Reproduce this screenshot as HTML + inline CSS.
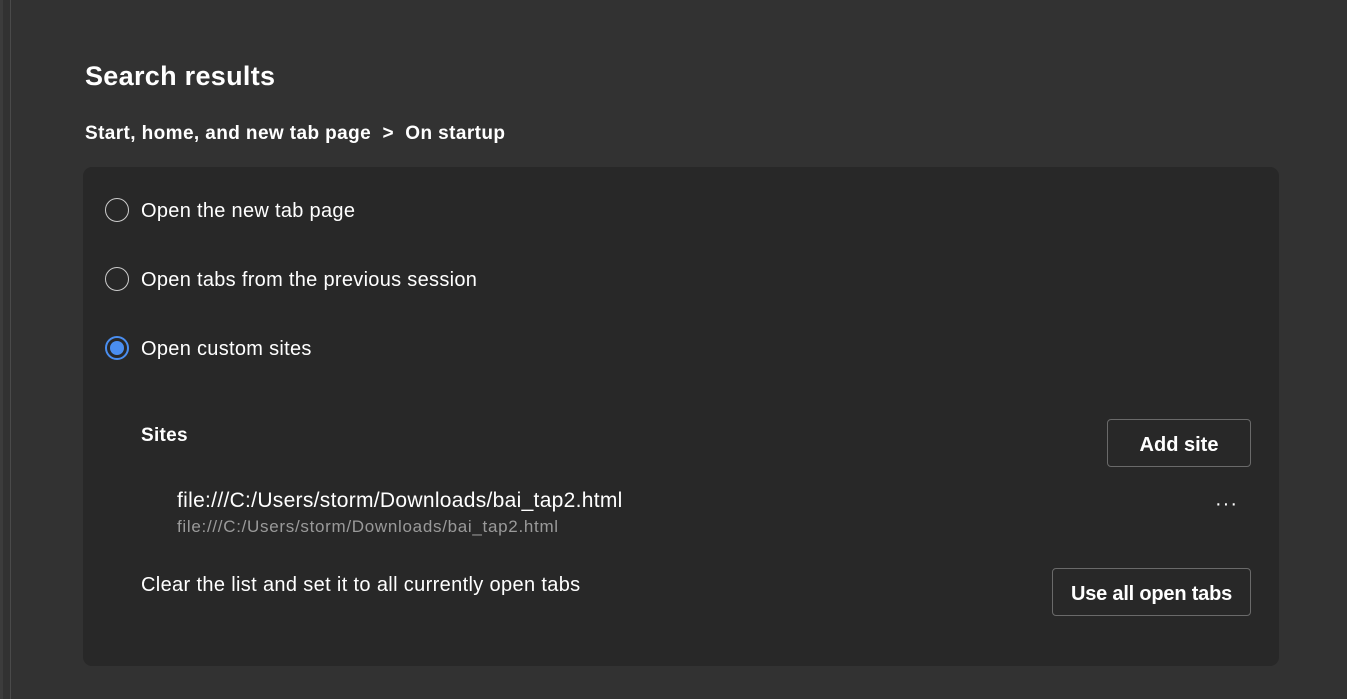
<!DOCTYPE html>
<html><head><meta charset="utf-8"><style>
*{margin:0;padding:0;box-sizing:border-box}
body{width:1347px;height:699px;background:#323232;font-family:"Liberation Sans",sans-serif;color:#fff;position:relative;overflow:hidden}
.ledge{position:absolute;left:0;top:0;width:3px;height:699px;background:#3c3c3c}
.lline{position:absolute;left:10px;top:0;width:1px;height:699px;background:#4a4a4a}
h1{position:absolute;left:85px;top:61px;font-size:27px;font-weight:bold;letter-spacing:0.3px}
.crumb{position:absolute;left:85px;top:123px;font-size:19px;font-weight:bold;letter-spacing:0.4px}
.card{position:absolute;left:83px;top:167px;width:1196px;height:499px;background:#282828;border-radius:9px}
.r{position:absolute;left:22px;width:24px;height:24px;border:1.5px solid #ccc;border-radius:50%}
.r.on{border:2px solid #4a8ef0}
.r.on::after{content:"";position:absolute;left:3px;top:3px;width:14px;height:14px;border-radius:50%;background:#4a8ef0}
.t{position:absolute;left:58px;font-size:20px;letter-spacing:0.3px}
.btn{position:absolute;border:1px solid #6a6a6a;border-radius:4px;font-size:20px;font-weight:bold;display:flex;align-items:center;justify-content:center;height:48px;padding-top:4px}
</style></head><body>
<div class="ledge"></div><div class="lline"></div>
<h1>Search results</h1>
<div class="crumb">Start, home, and new tab page &nbsp;&gt;&nbsp; On startup</div>
<div class="card">
<div class="r" style="top:31px"></div><div class="t" style="top:33px">Open the new tab page</div>
<div class="r" style="top:100px"></div><div class="t" style="top:102px">Open tabs from the previous session</div>
<div class="r on" style="top:169px"></div><div class="t" style="top:171px">Open custom sites</div>
<div class="t" style="top:258px;font-weight:bold;font-size:19px">Sites</div>
<div class="btn" style="left:1024px;top:252px;width:144px">Add site</div>
<div class="t" style="left:94px;top:322px;font-size:21px;letter-spacing:0.3px">file:///C:/Users/storm/Downloads/bai_tap2.html</div>
<div class="t" style="left:94px;top:350px;font-size:17px;color:#9a9a9a;letter-spacing:0.7px">file:///C:/Users/storm/Downloads/bai_tap2.html</div>
<div class="t" style="left:1132px;top:326px;font-size:20px;letter-spacing:1px">···</div>
<div class="t" style="top:407px;letter-spacing:0.35px">Clear the list and set it to all currently open tabs</div>
<div class="btn" style="left:969px;top:401px;width:199px;letter-spacing:-0.2px">Use all open tabs</div>
</div>
</body></html>
